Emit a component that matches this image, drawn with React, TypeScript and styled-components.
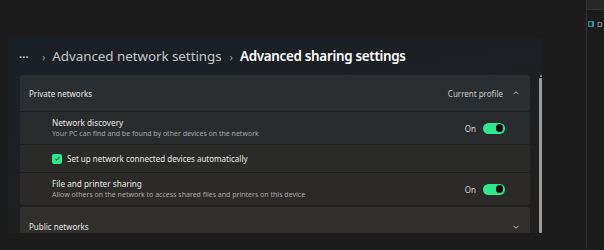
import React from "react";
import styled, { createGlobalStyle } from "styled-components";

const Global = createGlobalStyle`
  html, body { margin: 0; padding: 0; background: #1c1c1c; overflow: hidden; }
  body { font-family: "Noto Sans", "Segoe UI", Arial, sans-serif; -webkit-font-smoothing: antialiased; }
  * { box-sizing: border-box; }
`;

const Screen = styled.div`
  display: flex;
  width: 604px;
  height: 250px;
  background: #1c1c1c;
  overflow: hidden;
`;

const Main = styled.div`
  width: 586px;
  display: flex;
  flex-direction: column;
  padding: 38px 0 0 8px;
`;

const Window = styled.div`
  width: 534px;
  height: 195px;
  display: flex;
  flex-direction: column;
  overflow: hidden;
  background: linear-gradient(170deg, #1a2027 0%, #1c2025 30%, #1f1f1f 70%, #201f1d 100%);
`;

const Breadcrumb = styled.div`
  height: 36px;
  flex-shrink: 0;
  display: flex;
  align-items: center;
  padding-left: 11px;
  font-size: 13.4px;
`;

const Dots = styled.span`
  color: #c9c9c9;
  font-size: 11px;
  letter-spacing: 0.2px;
  margin-right: 13px;
  font-weight: 700;
`;

const Sep = styled.span`
  color: #9a9a9a;
  font-size: 11px;
  margin-right: 7px;
`;

const Crumb = styled.span<{ $current?: boolean }>`
  color: ${(p) => (p.$current ? "#ffffff" : "#c4c6c8")};
  font-weight: ${(p) => (p.$current ? 600 : 400)};
  letter-spacing: ${(p) => (p.$current ? "-0.3px" : "-0.05px")};
  margin-right: ${(p) => (p.$current ? 0 : 8)}px;
`;

const Body = styled.div`
  display: flex;
  flex: 1;
  min-height: 0;
`;

const Cards = styled.div`
  margin-left: 12px;
  width: 510px;
  display: flex;
  flex-direction: column;
  gap: 2px;
  padding-top: 1px;
`;

const Card = styled.div`
  flex-shrink: 0;
  display: flex;
  flex-direction: column;
  border-radius: 3px;
  overflow: hidden;
  gap: 1px;
  background: #1e1f20;
`;

const Header = styled.div<{ $tone: string; $pushDown?: boolean }>`
  height: 36px;
  flex-shrink: 0;
  display: flex;
  align-items: center;
  padding: ${(p) => (p.$pushDown ? "3px" : "0")} 10px 0 9px;
  background: ${(p) => p.$tone};
  color: #e6e6e6;
  font-size: 8px;
`;

const HeaderTitle = styled.span`
  flex: 1;
`;

const HeaderMeta = styled.span`
  color: #c8c8c8;
  margin-right: 9px;
`;

const Row = styled.div<{ $h: number; $tone: string }>`
  height: ${(p) => p.$h}px;
  flex-shrink: 0;
  display: flex;
  align-items: center;
  padding: 0 25px 0 32px;
  background: ${(p) => p.$tone};
`;

const Texts = styled.div`
  flex: 1;
  display: flex;
  flex-direction: column;
  gap: 1px;
`;

const Title = styled.span`
  color: #e8e8e8;
  font-size: 8.2px;
  line-height: 10px;
`;

const Sub = styled.span`
  color: #a9a9a9;
  font-size: 7px;
  line-height: 9px;
`;

const State = styled.span`
  color: #d6d6d6;
  font-size: 8px;
  margin-right: 7px;
`;

const Toggle = styled.div`
  width: 22px;
  height: 11px;
  border-radius: 6px;
  background: #31e78b;
  display: flex;
  align-items: center;
  justify-content: flex-end;
  padding-right: 2px;
`;

const Knob = styled.div`
  width: 7.5px;
  height: 7.5px;
  border-radius: 50%;
  background: #0b0b0b;
`;

const Check = styled.div`
  width: 10px;
  height: 10px;
  border-radius: 2px;
  background: #31e78b;
  display: flex;
  align-items: center;
  justify-content: center;
  margin-right: 5px;
`;

const CheckLabel = styled.span`
  color: #e8e8e8;
  font-size: 8px;
`;

const Chevron = styled.svg`
  width: 8px;
  height: 8px;
`;

const ScrollTrack = styled.div`
  margin-left: 9px;
  width: 3px;
  display: flex;
  flex-direction: column;
  align-items: center;
`;

const ScrollArrow = styled.div`
  width: 0;
  height: 0;
  border-left: 1.5px solid transparent;
  border-right: 1.5px solid transparent;
  border-bottom: 3px solid #a0a0a0;
  margin-bottom: 1px;
`;

const ScrollThumb = styled.div`
  flex: 1;
  width: 2.5px;
  border-radius: 1px;
  background: #9c9c9c;
`;

const Side = styled.div`
  flex: 1;
  border-left: 1px solid #2e2e2e;
  background: #1b1b1b;
  display: flex;
  flex-direction: column;
`;

const SideBar = styled.div`
  height: 10px;
  background: #262626;
  border-bottom: 1px solid #333;
`;

const SideItem = styled.div`
  display: flex;
  align-items: center;
  gap: 3px;
  margin-top: 9px;
  padding-left: 1px;
  color: #bdbdbd;
  font-size: 7.5px;
  white-space: nowrap;
`;

const SideIcon = styled.div`
  width: 6px;
  height: 6px;
  border: 1px solid #3a8c9a;
  border-right-width: 2px;
  background: #163840;
`;

const Up = () => (
  <Chevron viewBox="0 0 8 8">
    <path d="M1.5 5.2 L4 2.7 L6.5 5.2" fill="none" stroke="#cfcfcf" strokeWidth="0.9" />
  </Chevron>
);
const Down = () => (
  <Chevron viewBox="0 0 8 8">
    <path d="M1.5 2.8 L4 5.3 L6.5 2.8" fill="none" stroke="#cfcfcf" strokeWidth="0.9" />
  </Chevron>
);

const OnToggle = () => (
  <>
    <State>On</State>
    <Toggle>
      <Knob />
    </Toggle>
  </>
);

export default function App() {
  return (
    <>
      <Global />
      <Screen>
        <Main>
          <Window>
            <Breadcrumb>
              <Dots>···</Dots>
              <Sep>›</Sep>
              <Crumb>Advanced network settings</Crumb>
              <Sep>›</Sep>
              <Crumb $current>Advanced sharing settings</Crumb>
            </Breadcrumb>
            <Body>
              <Cards>
                <Card>
                  <Header $tone="#2b2e31">
                    <HeaderTitle>Private networks</HeaderTitle>
                    <HeaderMeta>Current profile</HeaderMeta>
                    <Up />
                  </Header>
                  <Row $h={32} $tone="#292b2c">
                    <Texts>
                      <Title>Network discovery</Title>
                      <Sub>Your PC can find and be found by other devices on the network</Sub>
                    </Texts>
                    <OnToggle />
                  </Row>
                  <Row $h={27} $tone="#2a2a29">
                    <Check>
                      <svg width="7" height="7" viewBox="0 0 7 7">
                        <path d="M1.2 3.7 L2.8 5.2 L5.8 1.9" fill="none" stroke="#10301f" strokeWidth="1" />
                      </svg>
                    </Check>
                    <CheckLabel>Set up network connected devices automatically</CheckLabel>
                  </Row>
                  <Row $h={32} $tone="#2b2a28">
                    <Texts>
                      <Title>File and printer sharing</Title>
                      <Sub>Allow others on the network to access shared files and printers on this device</Sub>
                    </Texts>
                    <OnToggle />
                  </Row>
                </Card>
                <Card>
                  <Header $tone="#302f2c" $pushDown>
                    <HeaderTitle>Public networks</HeaderTitle>
                    <Down />
                  </Header>
                </Card>
              </Cards>
              <ScrollTrack>
                <ScrollArrow />
                <ScrollThumb />
              </ScrollTrack>
            </Body>
          </Window>
        </Main>
        <Side>
          <SideBar />
          <SideItem>
            <SideIcon />
            <span>D</span>
          </SideItem>
        </Side>
      </Screen>
    </>
  );
}
